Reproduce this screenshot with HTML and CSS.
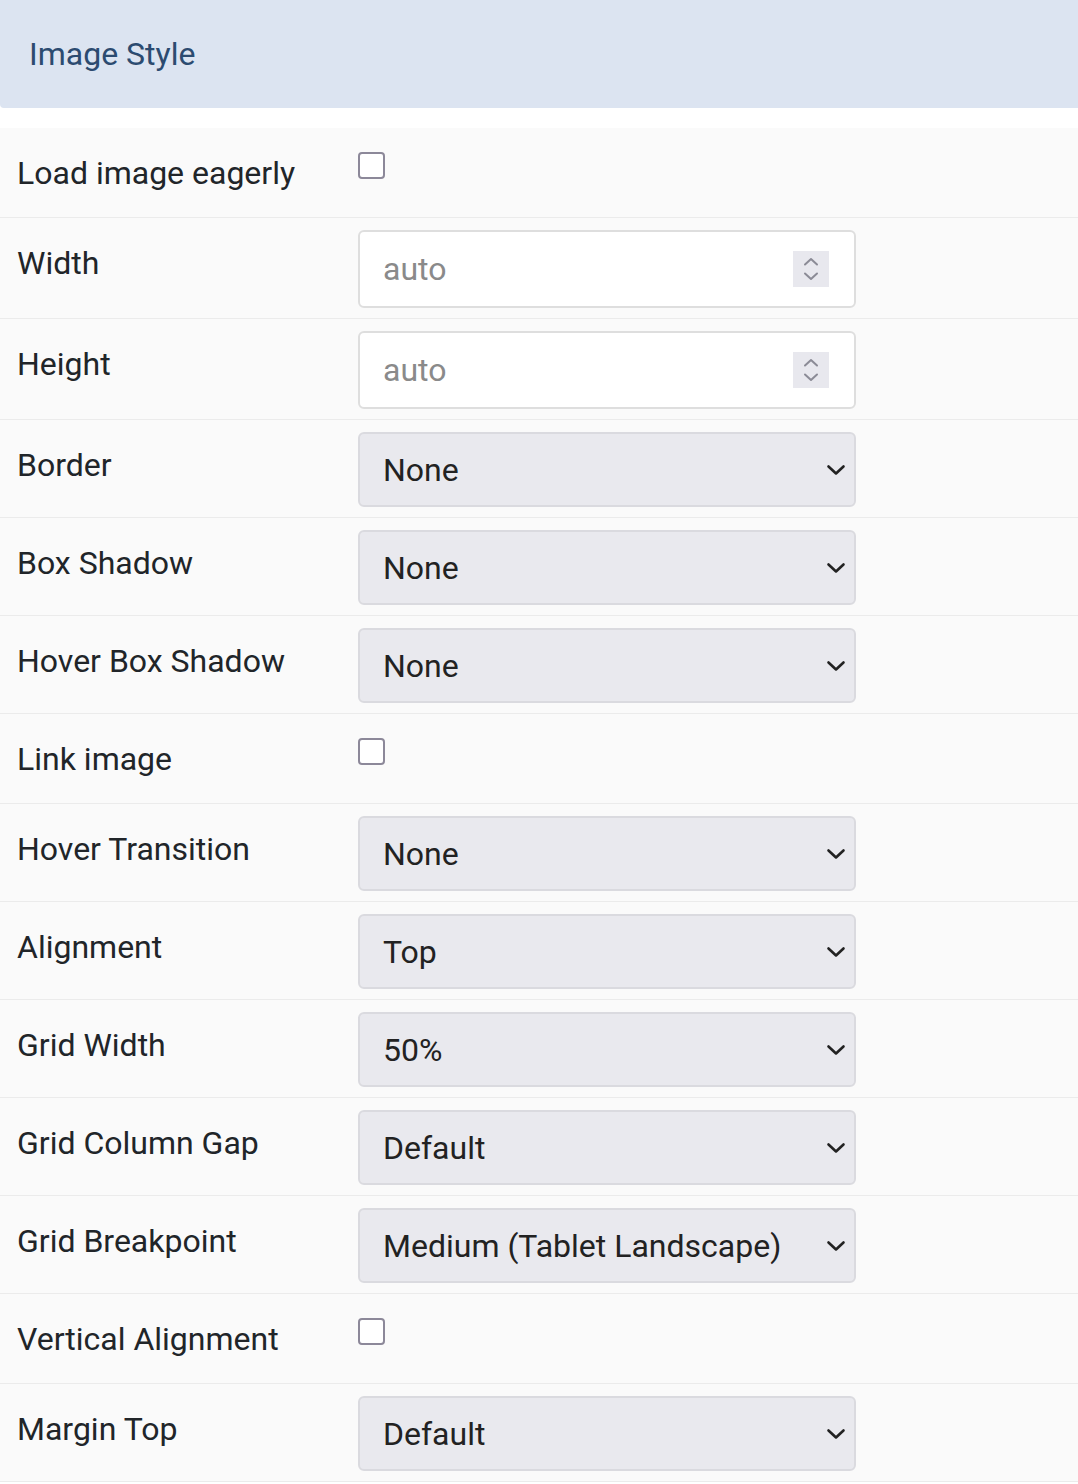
FILE: index.html
```html
<!DOCTYPE html>
<html lang="en">
<head>
  <meta charset="UTF-8">
  <title>Image Style</title>
  <link rel="stylesheet" href="styles.css">
</head>
<body>

<div class="panel-head">Image Style</div>

<div class="fields">
  <div class="row">
    <label class="label">Load image eagerly</label>
    <div class="check-wrap"><input type="checkbox" class="check"></div>
  </div>

  <div class="row">
    <label class="label">Width</label>
    <div class="number">
      <span class="placeholder">auto</span>
      <span class="spin">
        <svg width="16" height="28" viewBox="0 0 16 28"><path d="M2 9.5 L8 4 L14 9.5 M2 18.5 L8 24 L14 18.5" fill="none" stroke="#8b8b96" stroke-width="2" stroke-linecap="round" stroke-linejoin="round"/></svg>
      </span>
    </div>
  </div>

  <div class="row">
    <label class="label">Height</label>
    <div class="number">
      <span class="placeholder">auto</span>
      <span class="spin">
        <svg width="16" height="28" viewBox="0 0 16 28"><path d="M2 9.5 L8 4 L14 9.5 M2 18.5 L8 24 L14 18.5" fill="none" stroke="#8b8b96" stroke-width="2" stroke-linecap="round" stroke-linejoin="round"/></svg>
      </span>
    </div>
  </div>

  <div class="row">
    <label class="label">Border</label>
    <div class="select"><span>None</span><svg class="caret" width="20" height="12" viewBox="0 0 20 12"><path d="M2.5 2.5 L10 9.5 L17.5 2.5" fill="none" stroke="#222" stroke-width="2.6" stroke-linecap="round" stroke-linejoin="round"/></svg></div>
  </div>

  <div class="row">
    <label class="label">Box Shadow</label>
    <div class="select"><span>None</span><svg class="caret" width="20" height="12" viewBox="0 0 20 12"><path d="M2.5 2.5 L10 9.5 L17.5 2.5" fill="none" stroke="#222" stroke-width="2.6" stroke-linecap="round" stroke-linejoin="round"/></svg></div>
  </div>

  <div class="row">
    <label class="label">Hover Box Shadow</label>
    <div class="select"><span>None</span><svg class="caret" width="20" height="12" viewBox="0 0 20 12"><path d="M2.5 2.5 L10 9.5 L17.5 2.5" fill="none" stroke="#222" stroke-width="2.6" stroke-linecap="round" stroke-linejoin="round"/></svg></div>
  </div>

  <div class="row">
    <label class="label">Link image</label>
    <div class="check-wrap"><input type="checkbox" class="check"></div>
  </div>

  <div class="row">
    <label class="label">Hover Transition</label>
    <div class="select"><span>None</span><svg class="caret" width="20" height="12" viewBox="0 0 20 12"><path d="M2.5 2.5 L10 9.5 L17.5 2.5" fill="none" stroke="#222" stroke-width="2.6" stroke-linecap="round" stroke-linejoin="round"/></svg></div>
  </div>

  <div class="row">
    <label class="label">Alignment</label>
    <div class="select"><span>Top</span><svg class="caret" width="20" height="12" viewBox="0 0 20 12"><path d="M2.5 2.5 L10 9.5 L17.5 2.5" fill="none" stroke="#222" stroke-width="2.6" stroke-linecap="round" stroke-linejoin="round"/></svg></div>
  </div>

  <div class="row">
    <label class="label">Grid Width</label>
    <div class="select"><span>50%</span><svg class="caret" width="20" height="12" viewBox="0 0 20 12"><path d="M2.5 2.5 L10 9.5 L17.5 2.5" fill="none" stroke="#222" stroke-width="2.6" stroke-linecap="round" stroke-linejoin="round"/></svg></div>
  </div>

  <div class="row">
    <label class="label">Grid Column Gap</label>
    <div class="select"><span>Default</span><svg class="caret" width="20" height="12" viewBox="0 0 20 12"><path d="M2.5 2.5 L10 9.5 L17.5 2.5" fill="none" stroke="#222" stroke-width="2.6" stroke-linecap="round" stroke-linejoin="round"/></svg></div>
  </div>

  <div class="row">
    <label class="label">Grid Breakpoint</label>
    <div class="select"><span>Medium (Tablet Landscape)</span><svg class="caret" width="20" height="12" viewBox="0 0 20 12"><path d="M2.5 2.5 L10 9.5 L17.5 2.5" fill="none" stroke="#222" stroke-width="2.6" stroke-linecap="round" stroke-linejoin="round"/></svg></div>
  </div>

  <div class="row">
    <label class="label">Vertical Alignment</label>
    <div class="check-wrap"><input type="checkbox" class="check"></div>
  </div>

  <div class="row">
    <label class="label">Margin Top</label>
    <div class="select"><span>Default</span><svg class="caret" width="20" height="12" viewBox="0 0 20 12"><path d="M2.5 2.5 L10 9.5 L17.5 2.5" fill="none" stroke="#222" stroke-width="2.6" stroke-linecap="round" stroke-linejoin="round"/></svg></div>
  </div>
</div>

</body>
</html>
```

FILE: styles.css
```css
body {
  margin: 0;
  background-color: #fff;
  color: #212529;
  font-family: Roboto, "Liberation Sans", Arial, sans-serif;
}

.panel-head {
  height: 108px;
  display: flex;
  align-items: center;
  padding: 0 29px;
  background-color: #dce4f1;
  color: #2c4b70;
  font-size: 32px;
  border-bottom-left-radius: 4px;
  margin-bottom: 20px;
}

.row {
  display: grid;
  grid-template-columns: 341px 498px;
  align-items: start;
  padding: 12px 0 10px 17px;
  background-color: #fafafa;
  border-bottom: 1px solid #ebebeb;
}

.label {
  padding-top: 15px;
  font-size: 32px;
  line-height: 36px;
}

.check-wrap {
  height: 67px;
}

.check {
  appearance: none;
  -webkit-appearance: none;
  display: block;
  margin: 12px 0 0 0;
  width: 27px;
  height: 27px;
  background-color: #fff;
  border: 2px solid #8c8899;
  border-radius: 4px;
}

.number {
  box-sizing: border-box;
  height: 78px;
  display: flex;
  align-items: center;
  justify-content: space-between;
  padding: 0 25px 0 23px;
  background-color: #fff;
  border: 2px solid #dedede;
  border-radius: 6px;
  font-size: 32px;
}

.placeholder {
  color: #8a8a8a;
}

.spin {
  display: flex;
  align-items: center;
  justify-content: center;
  width: 36px;
  height: 36px;
  background-color: #e8e8ee;
}

.select {
  box-sizing: border-box;
  height: 75px;
  display: flex;
  align-items: center;
  justify-content: space-between;
  padding: 0 8px 0 23px;
  background-color: #e9e9ee;
  border: 2px solid #dadadf;
  border-radius: 6px;
  font-size: 32px;
  color: #222;
}
```
